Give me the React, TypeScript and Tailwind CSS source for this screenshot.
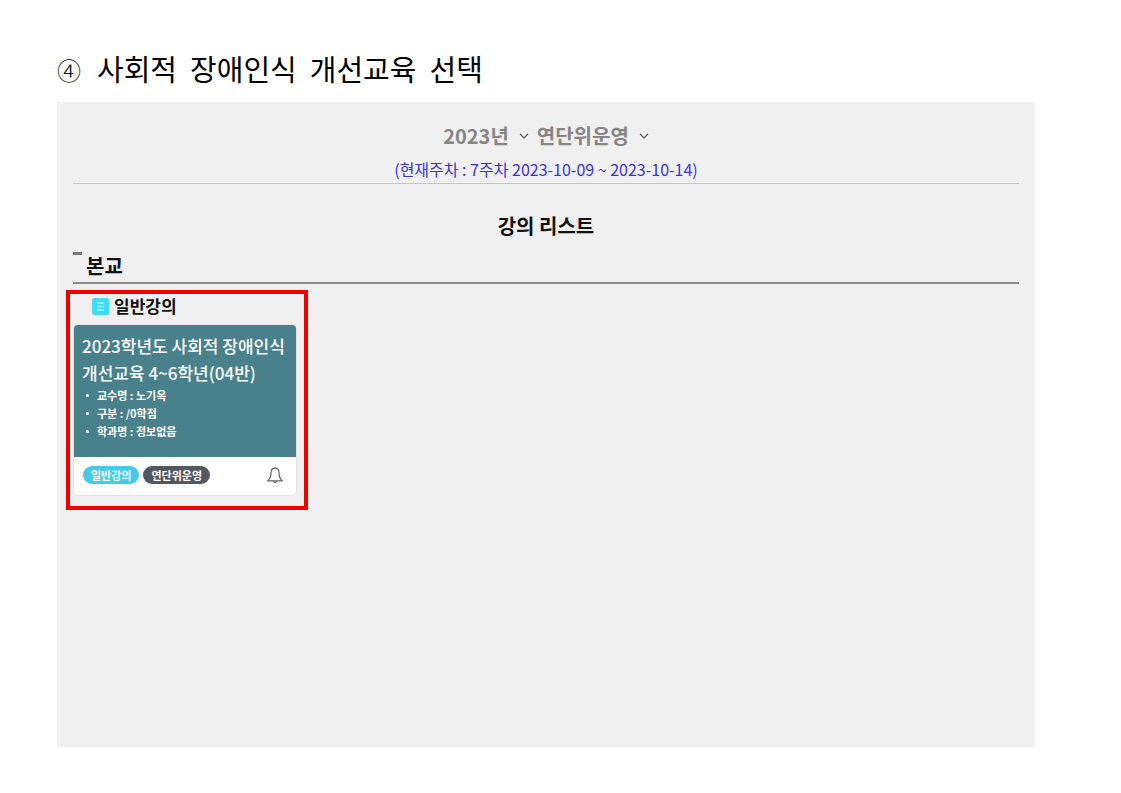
import React, { useState } from "react";

const details = [
  { label: "교수명", value: "노기옥" },
  { label: "구분", value: "/0학점" },
  { label: "학과명", value: "정보없음" },
];

const Chevron = () => (
  <svg viewBox="0 0 10 10" className="h-[10px] w-[10px]" fill="none" stroke="#555" strokeWidth="1.2" aria-hidden="true">
    <path d="M1 3l4 4 4-4" />
  </svg>
);

const ListIcon = () => (
  <svg viewBox="0 0 17 17" className="h-[17px] w-[17px]" aria-hidden="true">
    <rect width="17" height="17" rx="2.5" fill="#3fdcf5" />
    <path d="M5 5h7M5 8.500h7M5 12h7" stroke="#a4f2fd" strokeWidth="1.5" />
  </svg>
);

const BellIcon = () => (
  <svg viewBox="0 0 18 18" className="h-[18px] w-[18px]" fill="none" stroke="#666" strokeWidth="1.2" strokeLinejoin="round" aria-hidden="true">
    <path d="M9 1v1.200M9 2.200C6.300 2.200 5 4.200 5 7c0 4-.9 6-3.400 7.800h14.800C13.900 13 13 11 13 7c0-2.800-1.300-4.800-4-4.800z" />
    <path d="M7.500 15a1.500 1.500 0 0 0 3 0" />
  </svg>
);

type PickerProps = {
  label: string;
  options: string[];
  value: string;
  onChange: (value: string) => void;
};

const Picker = ({ label, options, value, onChange }: PickerProps) => (
  <div className="flex items-center gap-[10px]">
    <select
      aria-label={label}
      value={value}
      onChange={(e) => onChange(e.target.value)}
      className="h-8 appearance-none [field-sizing:content] bg-transparent text-[20px] leading-[32px] font-bold text-[#858585]"
    >
      {options.map((option) => (
        <option key={option}>{option}</option>
      ))}
    </select>
    <Chevron />
  </div>
);

const CourseCard = () => (
  <article className="overflow-hidden rounded-[5px] border border-[#e2e2e2] bg-white">
    <div className="h-[132px] bg-[#48818c] px-2 pt-[7px] text-white">
      <h4 className="text-[17px] leading-[27px] font-medium">
        <a href="#course">
          2023학년도 사회적 장애인식
          <br />
          개선교육 4~6학년(04반)
        </a>
      </h4>
      <ul className="pl-1 text-[11px] leading-[18px] font-bold">
        {details.map((item) => (
          <li key={item.label} className="flex items-center gap-2">
            <span className="h-[3px] w-[3px] rounded-full bg-white" />
            {item.label} : {item.value}
          </li>
        ))}
      </ul>
    </div>
    <div className="flex h-[38px] items-center justify-between pr-3 pb-[2px] pl-[9px]">
      <div className="flex gap-1 text-[11px] leading-[18px] font-bold text-white">
        <span className="rounded-full bg-[#44cbe8] px-2">일반강의</span>
        <span className="rounded-full bg-[#53585f] px-2">연단위운영</span>
      </div>
      <button type="button" aria-label="알림">
        <BellIcon />
      </button>
    </div>
  </article>
);

const App = () => {
  const [year, setYear] = useState("2023년");
  const [term, setTerm] = useState("연단위운영");

  return (
    <div className="bg-white pt-12 pr-[86px] pb-[46px] pl-[57px] font-['Noto_Sans_CJK_KR',sans-serif] text-black">
      <h1 className="flex items-center gap-4 text-[29px] leading-[36px] whitespace-pre">
        <span className="pt-[4px] text-[24px] font-light">④</span>
        <span>사회적  장애인식  개선교육  선택</span>
      </h1>

      <main className="mt-[14px] min-h-[645px] bg-[#f0f0f0] px-4 pt-[18px] text-[#111]">
        <header className="border-b border-[#c4c4c4] pb-[2px] text-center">
          <div className="flex justify-center gap-2">
            <Picker label="연도" options={["2023년", "2022년"]} value={year} onChange={setYear} />
            <Picker label="학기" options={["연단위운영", "1학기", "2학기"]} value={term} onChange={setTerm} />
          </div>
          <p className="mt-[5px] text-[16px] leading-[24px] text-[#3a32e0]">
            (현재주차 : 7주차 2023-10-09 ~ 2023-10-14)
          </p>
        </header>

        <h2 className="mt-7 text-center text-[20px] leading-[28px] font-bold">강의 리스트</h2>

        <section>
          <div className="mt-3 flex gap-1 border-b-2 border-[#8c8c8c] pb-[2px]">
            <span className="h-[3px] w-[9px] bg-[#777]" />
            <h3 className="text-[20px] leading-[28px] font-bold">본교</h3>
          </div>

          <div className="-ml-[7px] mt-[6px] w-[242px] border-4 border-[#ee0000] px-[3px] pb-[10px]">
            <h3 className="flex items-center gap-[5px] pb-[6px] pl-[19px] text-[17px] leading-[24px] font-bold">
              <ListIcon />
              일반강의
            </h3>
            <div className="pr-1">
              <CourseCard />
            </div>
          </div>
        </section>
      </main>
    </div>
  );
};

export default App;
